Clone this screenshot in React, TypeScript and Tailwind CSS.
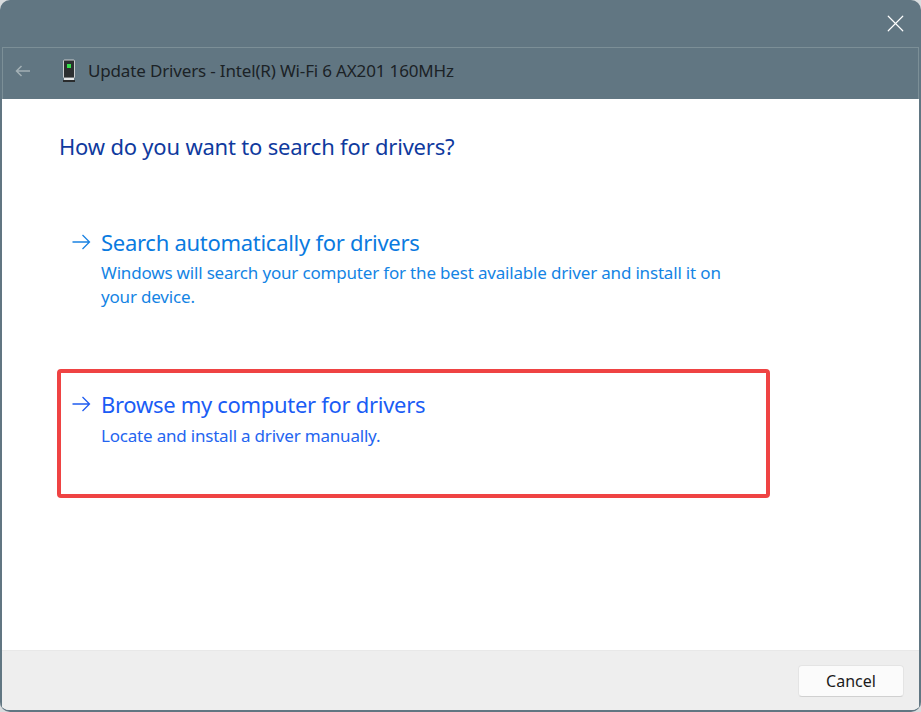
import { X } from "lucide-react";

const DeviceIcon = () => (
  <svg width="14" height="24" viewBox="0 0 14 24" className="shrink-0">
    <rect x="1.5" y="1" width="11" height="18" rx="1" fill="#2c2f30" stroke="#c9cdcf" strokeWidth="1" />
    <rect x="5" y="5" width="4" height="4" fill="#35e04a" />
    <rect x="2" y="19" width="10" height="3" fill="#e6e8e8" />
    <rect x="1" y="21" width="12" height="2" fill="#2a2c2d" />
  </svg>
);

const OptionArrow = ({ className }: { className: string }) => (
  <svg width="19" height="16" viewBox="0 0 19 16" fill="none" stroke="currentColor" strokeWidth="1.3" className={className}>
    <path d="M0.5 8H17.5M10.5 1L17.5 8L10.5 15" />
  </svg>
);

const App = () => {
  return (
    <div className="w-[921px] h-[712px] bg-[#d9dcde] overflow-hidden font-['Noto_Sans',sans-serif]">
      <div className="w-full h-full flex flex-col bg-[#617682] rounded-[10px] overflow-hidden border-b-[2px] border-[#617682]">
        {/* window top strip with the close button */}
        <div className="h-[47px] shrink-0 flex justify-end items-start pt-[9px] pr-[11px]">
          <X className="w-[29px] h-[29px] text-white" strokeWidth={1} />
        </div>

        {/* wizard header */}
        <div className="h-[52px] shrink-0 mx-[2px] pb-[5px] border-t border-x border-[#7c8f97] flex items-center pl-[12px]">
          <svg width="15" height="12" viewBox="0 0 15 12" fill="none" stroke="#a3b0b5" strokeWidth="1.5">
            <path d="M15 6H1.5M6.5 1L1.5 6L6.5 11" />
          </svg>
          <div className="ml-[32px]">
            <DeviceIcon />
          </div>
          <span className="ml-[12px] text-[17px] leading-[22px] tracking-[-0.16px] text-[#1b2226]">
            Update Drivers - Intel(R) Wi-Fi 6 AX201 160MHz
          </span>
        </div>

        {/* content */}
        <div className="flex-1 mx-[2px] bg-white flex flex-col">
          <div className="flex-1 pl-[55px] pt-[32px]">
            <h1 className="ml-[2px] text-[22px] leading-[30px] font-normal text-[#0f3a9e] tracking-[-0.2px]">
              How do you want to search for drivers?
            </h1>

            <div className="w-[713px] mt-[65px] pl-[15px] flex items-start">
              <OptionArrow className="mt-[8px] shrink-0 text-[#1a82e2]" />
              <div className="ml-[10px]">
                <div className="text-[22px] leading-[32px] tracking-[-0.28px] text-[#0a7ae0]">Search automatically for drivers</div>
                <div className="mt-[3px] text-[17px] leading-[24px] tracking-[-0.18px] text-[#1484e4]">
                  Windows will search your computer for the best available driver and install it on
                  <br />
                  your device.
                </div>
              </div>
            </div>

            {/* highlighted option */}
            <div className="w-[713px] h-[129px] mt-[60px] pl-[11px] pt-[15px] border-[4px] border-[#ef4343] rounded-[4px] flex items-start">
              <OptionArrow className="mt-[8px] shrink-0 text-[#1f5cf0]" />
              <div className="ml-[10px]">
                <div className="text-[22px] leading-[32px] tracking-[-0.3px] text-[#1a5cf5]">Browse my computer for drivers</div>
                <div className="mt-[4px] text-[17px] leading-[24px] tracking-[-0.2px] text-[#2465f0]">
                  Locate and install a driver manually.
                </div>
              </div>
            </div>
          </div>

          {/* footer */}
          <div className="h-[60px] shrink-0 bg-[#eeeeee] border-t border-[#e8e8e8] pt-[1px] flex items-center justify-end pr-[15px]">
            <button className="w-[106px] h-[32px] bg-[#fbfbfb] border border-[#e4e4e4] border-b-[#d0d0d0] rounded-[4px] text-[16px] text-[#1b1b1b]">
              Cancel
            </button>
          </div>
        </div>
      </div>
    </div>
  );
};

export default App;
